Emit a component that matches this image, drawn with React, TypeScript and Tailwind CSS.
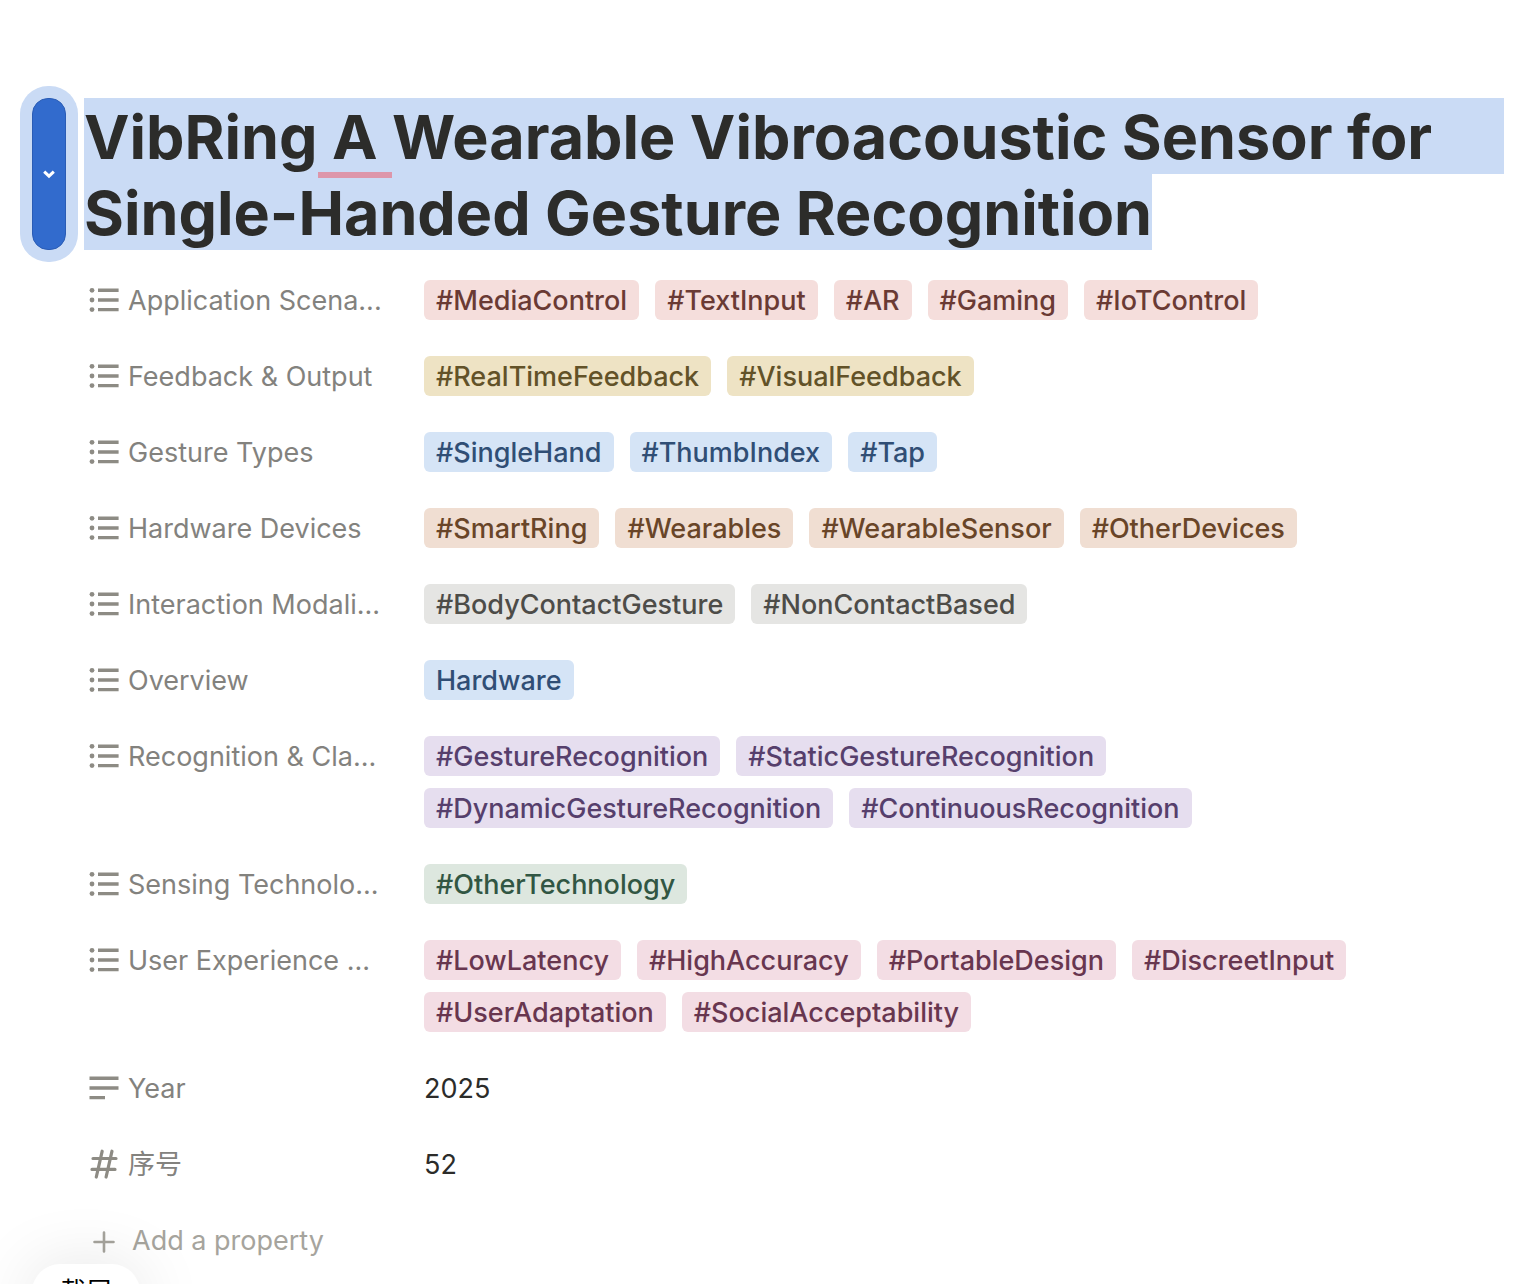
import React from 'react';

const tones = {
  red: 'bg-[#f5dedc] text-[#6a3a34]',
  yellow: 'bg-[#eee3c4] text-[#625228]',
  blue: 'bg-[#d5e4f6] text-[#304e75]',
  orange: 'bg-[#f0ded2] text-[#694528]',
  gray: 'bg-[#e5e5e3] text-[#4d4c48]',
  purple: 'bg-[#e6deef] text-[#563f6c]',
  green: 'bg-[#dde7df] text-[#315643]',
  pink: 'bg-[#f3dde4] text-[#68364f]',
};

type Tone = keyof typeof tones;

const rows: { label: string; tone: Tone; tags: string[] }[] = [
  { label: 'Application Scena...', tone: 'red', tags: ['#MediaControl', '#TextInput', '#AR', '#Gaming', '#IoTControl'] },
  { label: 'Feedback & Output', tone: 'yellow', tags: ['#RealTimeFeedback', '#VisualFeedback'] },
  { label: 'Gesture Types', tone: 'blue', tags: ['#SingleHand', '#ThumbIndex', '#Tap'] },
  { label: 'Hardware Devices', tone: 'orange', tags: ['#SmartRing', '#Wearables', '#WearableSensor', '#OtherDevices'] },
  { label: 'Interaction Modali...', tone: 'gray', tags: ['#BodyContactGesture', '#NonContactBased'] },
  { label: 'Overview', tone: 'blue', tags: ['Hardware'] },
  { label: 'Recognition & Cla...', tone: 'purple', tags: ['#GestureRecognition', '#StaticGestureRecognition', '#DynamicGestureRecognition', '#ContinuousRecognition'] },
  { label: 'Sensing Technolo...', tone: 'green', tags: ['#OtherTechnology'] },
  { label: 'User Experience ...', tone: 'pink', tags: ['#LowLatency', '#HighAccuracy', '#PortableDesign', '#DiscreetInput', '#UserAdaptation', '#SocialAcceptability'] },
];

function ListIcon() {
  return (
    <svg className="size-8 shrink-0 text-[#8d8b84]" viewBox="0 0 32 32" fill="none" stroke="currentColor" strokeWidth="3.4" aria-hidden="true">
      <path d="M10 6.3h20.6M10 16h20.6M10 25.6h20.6" />
      <g fill="currentColor" stroke="none">
        <circle cx="4" cy="6.3" r="2.4" />
        <circle cx="4" cy="16" r="2.4" />
        <circle cx="4" cy="25.6" r="2.4" />
      </g>
    </svg>
  );
}

function TextIcon() {
  return (
    <svg className="size-8 shrink-0 text-[#8d8b84]" viewBox="0 0 32 32" fill="none" stroke="currentColor" strokeWidth="3.4" aria-hidden="true">
      <path d="M1.5 6.3h29M1.5 16h29M1.5 25.6h15.5" />
    </svg>
  );
}

function NumberIcon() {
  return (
    <svg className="size-8 shrink-0 text-[#8d8b84]" viewBox="0 0 32 32" fill="none" stroke="currentColor" strokeWidth="3.2" strokeLinecap="round" aria-hidden="true">
      <path d="M5 10.500h23M4 21.400h23M14.200 3.200 8.300 29M24 3.200 18.100 29" />
    </svg>
  );
}

function Property({ icon, label, children }: { icon: React.ReactNode; label: string; children: React.ReactNode }) {
  return (
    <div className="flex items-start">
      <dt className="flex h-10 w-[336px] shrink-0 items-center gap-2 whitespace-nowrap text-[#83827e]">
        {icon}
        <span className="pt-0.5">{label}</span>
      </dt>
      <dd className="flex min-w-0 flex-1 flex-wrap gap-x-4 gap-y-3 pr-32">{children}</dd>
    </div>
  );
}

export default function App() {
  return (
    <main className="relative h-screen overflow-hidden bg-white pt-[98px] font-['Inter','Noto_Sans_CJK_SC',sans-serif] text-[27px] text-[#2c2c2a]">
      <header className="flex items-stretch pl-8 pr-4">
        <button type="button" aria-label="Toggle title" className="mr-[18px] flex w-[34px] shrink-0 items-center justify-center rounded-2xl border border-[#2a5cb5] bg-[#326bcd] text-white ring-12 ring-[#cadbf5]">
          <svg className="size-4" viewBox="0 0 16 16" fill="none" stroke="currentColor" strokeWidth="3" aria-hidden="true">
            <path d="M3.200 5.600 8 10.200l4.800-4.600" />
          </svg>
        </button>
        <h1 className="min-w-0 flex-1 text-[61px] leading-[74px] font-bold whitespace-nowrap">
          <span className="block bg-[#cadbf5] pt-0.5">
            VibRing<span className="relative">{' A '}<span className="absolute inset-x-0 -bottom-1 h-1.5 bg-[#dd96aa]" /></span>Wearable Vibroacoustic Sensor for
          </span>
          <span className="block w-fit bg-[#cadbf5] pt-0.5">Single-Handed Gesture Recognition</span>
        </h1>
      </header>
      <dl className="flex flex-col gap-9 pt-[30px] pl-[88px]">
        {rows.map((row) => (
          <Property key={row.label} icon={<ListIcon />} label={row.label}>
            {row.tags.map((tag) => (
              <span key={tag} className={`h-10 rounded-md px-3 leading-[42px] font-medium whitespace-nowrap ${tones[row.tone]}`}>{tag}</span>
            ))}
          </Property>
        ))}
        <Property icon={<TextIcon />} label="Year"><span className="h-10 leading-[42px]">2025</span></Property>
        <Property icon={<NumberIcon />} label="序号"><span className="h-10 leading-[42px]">52</span></Property>
      </dl>
      <button type="button" className="mt-9 ml-[88px] flex h-10 items-center gap-3 text-[#a6a49d]">
        <svg className="size-8" viewBox="0 0 32 32" fill="none" stroke="currentColor" strokeWidth="2.6" strokeLinecap="round" aria-hidden="true">
          <path d="M16 8.500v19M6.500 18h19" />
        </svg>
        <span className="pt-0.5">Add a property</span>
      </button>
      <div className="absolute top-[1264px] left-8 rounded-full bg-white px-7 py-3 text-[26px] leading-8 text-black shadow-[0_8px_72px_rgba(0,0,0,0.14)]">截屏</div>
    </main>
  );
}
